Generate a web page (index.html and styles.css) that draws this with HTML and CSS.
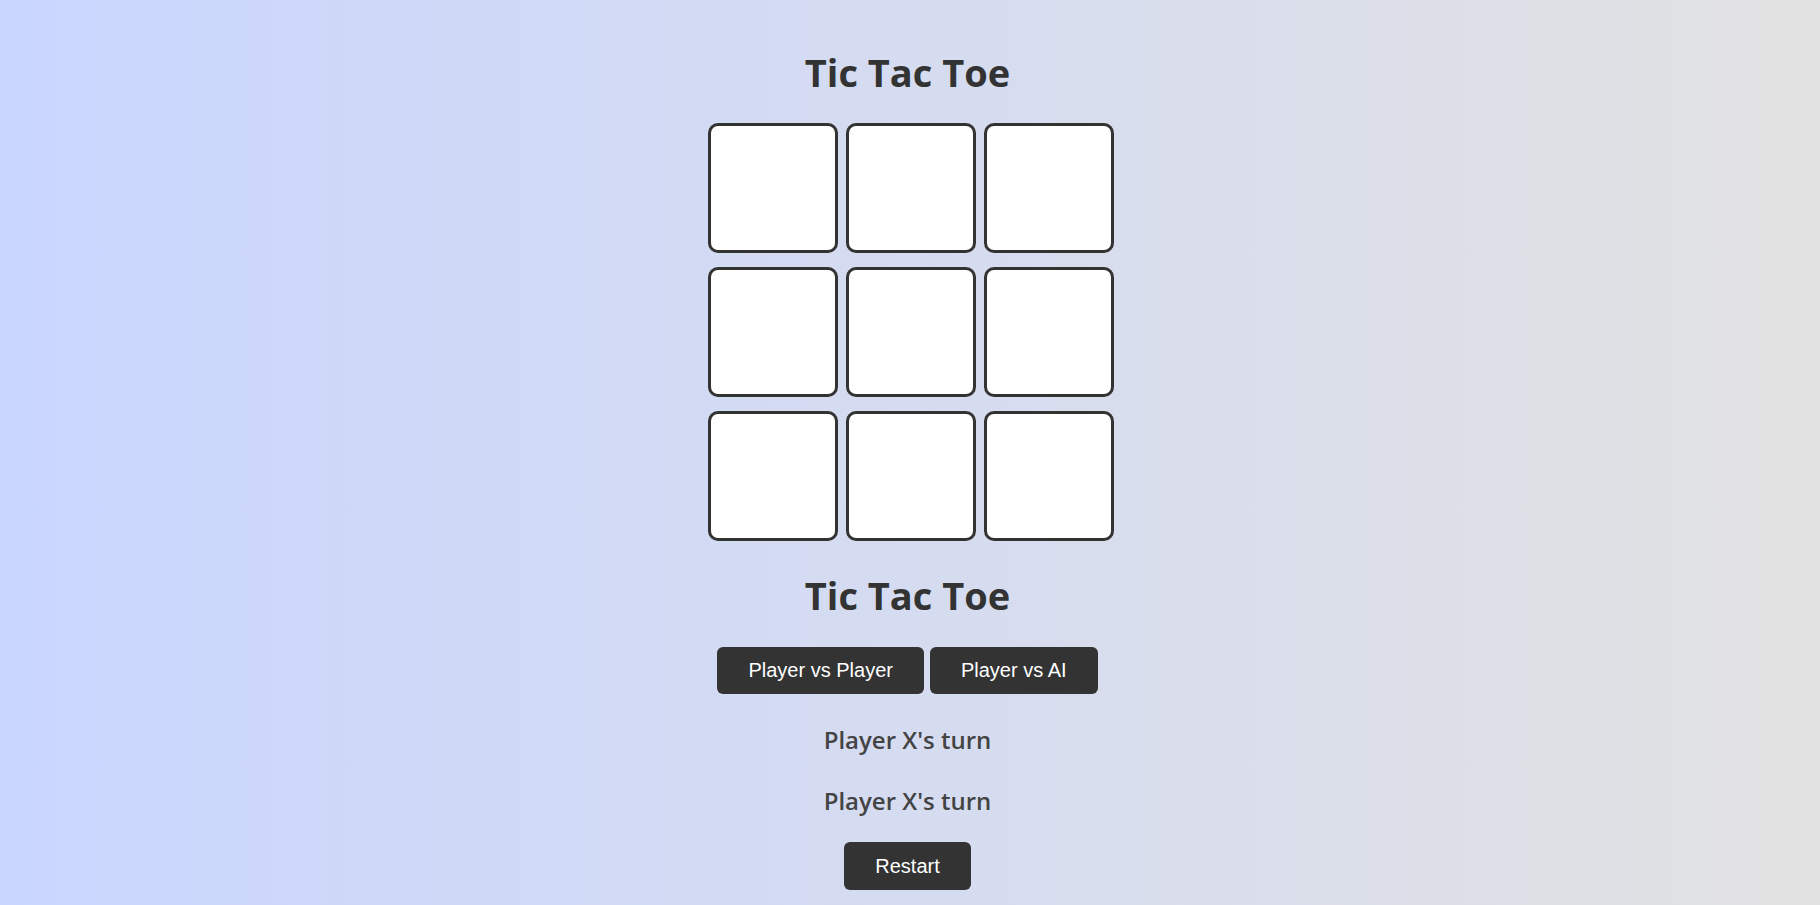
FILE: index.html
```html
<!DOCTYPE html>
<html lang="en">
<head>
<meta charset="utf-8">
<title>Tic Tac Toe</title>
<link rel="stylesheet" href="styles.css">
</head>
<body>
<main class="app">
  <h1 class="title title-top">Tic Tac Toe</h1>
  <div class="board">
    <div class="cell"></div>
    <div class="cell"></div>
    <div class="cell"></div>
    <div class="cell"></div>
    <div class="cell"></div>
    <div class="cell"></div>
    <div class="cell"></div>
    <div class="cell"></div>
    <div class="cell"></div>
  </div>
  <h1 class="title title-second">Tic Tac Toe</h1>
  <div class="modes">
    <button class="btn">Player vs Player</button>
    <button class="btn">Player vs AI</button>
  </div>
  <p class="status status-first">Player X's turn</p>
  <p class="status status-second">Player X's turn</p>
  <button class="btn restart">Restart</button>
</main>
</body>
</html>
```
FILE: styles.css
```css
html, body {
  margin: 0;
  padding: 0;
  height: 100%;
}
body {
  background: linear-gradient(to right, #c9d6ff, #e2e2e2);
  font-family: "Open Sans", "Noto Sans", sans-serif;
  color: #333;
  overflow: hidden;
}
.app {
  display: flex;
  flex-direction: column;
  align-items: center;
  padding-top: 48px;
  padding-right: 5px;
}
.title {
  margin: 0;
  font-size: 38px;
  line-height: 48px;
  font-weight: 700;
  color: #333;
}
.board {
  margin-top: 27px;
  margin-left: 7px;
  display: grid;
  grid-template-columns: repeat(3, 130px);
  grid-template-rows: repeat(3, 130px);
  column-gap: 8px;
  row-gap: 14px;
}
.cell {
  box-sizing: border-box;
  background: #fff;
  border: 3px solid #333;
  border-radius: 10px;
}
.title-second {
  margin-top: 30px;
}
.modes {
  margin-top: 28px;
  display: flex;
  gap: 6px;
}
.btn {
  font-family: "Liberation Sans", Arial, sans-serif;
  font-size: 20px;
  line-height: 23px;
  padding: 12px 31px;
  border: none;
  border-radius: 6px;
  background: #333;
  color: #fff;
  cursor: pointer;
}
.status {
  margin: 0;
  font-size: 24px;
  line-height: 30px;
  font-weight: 600;
  color: #444;
}
.status-first {
  margin-top: 31px;
}
.status-second {
  margin-top: 31px;
}
.restart {
  margin-top: 26px;
  height: 48px;
}
```
